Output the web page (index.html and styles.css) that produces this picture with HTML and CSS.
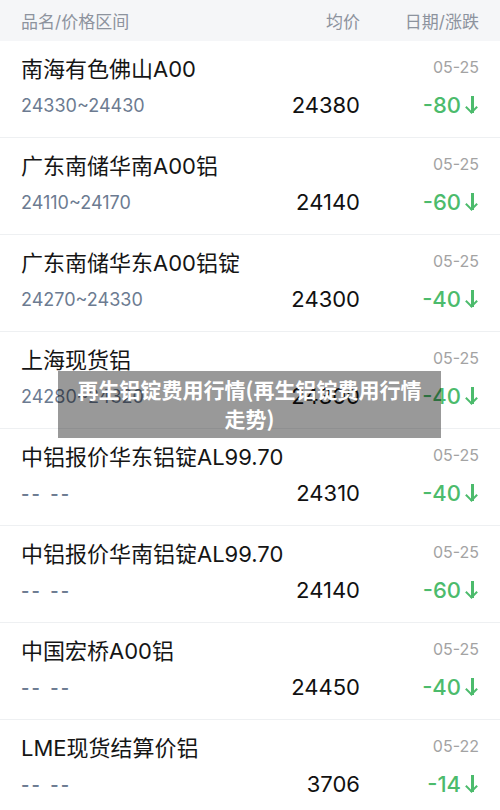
FILE: index.html
```html
<!DOCTYPE html>
<html lang="zh-CN">
<head>
    <meta charset="UTF-8">
    <meta name="viewport" content="width=device-width, initial-scale=1.0">
    <title>铝锭行情</title>
    <link rel="stylesheet" href="styles.css">
</head>
<body>

<div class="table-head">
    <span class="head-name">品名/价格区间</span>
    <span class="head-avg">均价</span>
    <span class="head-date">日期/涨跌</span>
</div>

<div class="list">
    <div class="row">
        <div class="row-top"><span class="name">南海有色佛山A00</span><span class="date">05-25</span></div>
        <div class="row-bottom"><span class="range">24330~24430</span><span class="avg">24380</span><span class="change">-80<i class="arrow"></i></span></div>
    </div>
    <div class="row">
        <div class="row-top"><span class="name">广东南储华南A00铝</span><span class="date">05-25</span></div>
        <div class="row-bottom"><span class="range">24110~24170</span><span class="avg">24140</span><span class="change">-60<i class="arrow"></i></span></div>
    </div>
    <div class="row">
        <div class="row-top"><span class="name">广东南储华东A00铝锭</span><span class="date">05-25</span></div>
        <div class="row-bottom"><span class="range">24270~24330</span><span class="avg">24300</span><span class="change">-40<i class="arrow"></i></span></div>
    </div>
    <div class="row">
        <div class="row-top"><span class="name">上海现货铝</span><span class="date">05-25</span></div>
        <div class="row-bottom"><span class="range">24280~24320</span><span class="avg">24300</span><span class="change">-40<i class="arrow"></i></span></div>
    </div>
    <div class="row">
        <div class="row-top"><span class="name">中铝报价华东铝锭AL99.70</span><span class="date">05-25</span></div>
        <div class="row-bottom"><span class="range empty">-- --</span><span class="avg">24310</span><span class="change">-40<i class="arrow"></i></span></div>
    </div>
    <div class="row">
        <div class="row-top"><span class="name">中铝报价华南铝锭AL99.70</span><span class="date">05-25</span></div>
        <div class="row-bottom"><span class="range empty">-- --</span><span class="avg">24140</span><span class="change">-60<i class="arrow"></i></span></div>
    </div>
    <div class="row">
        <div class="row-top"><span class="name">中国宏桥A00铝</span><span class="date">05-25</span></div>
        <div class="row-bottom"><span class="range empty">-- --</span><span class="avg">24450</span><span class="change">-40<i class="arrow"></i></span></div>
    </div>
    <div class="row">
        <div class="row-top"><span class="name">LME现货结算价铝</span><span class="date">05-22</span></div>
        <div class="row-bottom"><span class="range empty">-- --</span><span class="avg">3706</span><span class="change">-14<i class="arrow"></i></span></div>
    </div>
</div>

<div class="caption">再生铝锭费用行情(再生铝锭费用行情走势)</div>

</body>
</html>
```

FILE: styles.css
```css
body {
    margin: 0;
    font-family: Inter, "Noto Sans CJK SC", "Noto Sans", sans-serif;
    background-color: #fff;
    color: #111;
    height: 810px;
    overflow: hidden;
    position: relative;
}

.table-head {
    display: flex;
    align-items: center;
    height: 41px;
    padding: 0 21px;
    background-color: #f5f6f8;
    color: #8d939e;
    font-size: 17px;
}

.head-name {
    flex: 1;
}

.head-avg {
    width: 80px;
    text-align: right;
}

.head-date {
    width: 119px;
    text-align: right;
}

.row {
    height: 96px;
    border-bottom: 1px solid #eef0f2;
    padding: 0 21px;
}

.row-top {
    display: flex;
    justify-content: space-between;
    align-items: center;
    height: 51px;
}

.name {
    font-size: 22px;
    color: #151515;
}

.date {
    font-size: 16px;
    color: #a3a3a3;
}

.row-bottom {
    display: flex;
    align-items: center;
    height: 26px;
}

.range {
    flex: 1;
    font-size: 18px;
    color: #6c7b91;
}

.range.empty {
    font-weight: 600;
    letter-spacing: 2px;
    word-spacing: 2px;
}

.avg {
    font-size: 22px;
    color: #111;
    text-align: right;
}

.change {
    width: 119px;
    font-size: 22px;
    font-weight: 500;
    color: #4cbb6c;
    display: flex;
    justify-content: flex-end;
    align-items: center;
}

.arrow {
    position: relative;
    width: 14px;
    height: 20px;
    margin-left: 4px;
}

.arrow::before {
    content: "";
    position: absolute;
    left: 6px;
    top: 1px;
    width: 2.5px;
    height: 17px;
    background-color: #4cbb6c;
}

.arrow::after {
    content: "";
    position: absolute;
    left: 2px;
    top: 8px;
    width: 7px;
    height: 7px;
    border-right: 2.5px solid #4cbb6c;
    border-bottom: 2.5px solid #4cbb6c;
    transform: rotate(45deg);
}

.caption {
    position: absolute;
    left: 58px;
    top: 371px;
    width: 383px;
    height: 67px;
    box-sizing: border-box;
    padding: 4px 12px;
    background-color: rgba(0, 0, 0, 0.4);
    color: #fff;
    font-family: "Noto Sans CJK SC", sans-serif;
    font-size: 21px;
    font-weight: 700;
    line-height: 29px;
    text-align: center;
}
```
